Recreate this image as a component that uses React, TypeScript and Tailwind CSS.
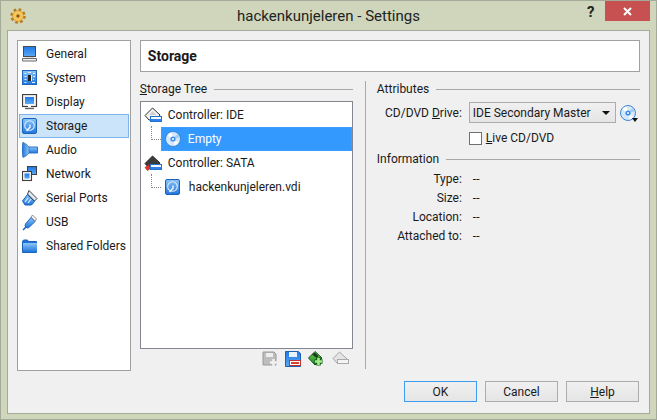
const uiFont = { fontFamily: 'Roboto, "Noto Sans", sans-serif' };

const Gradients = () => (
  <svg width="0" height="0" className="absolute">
    <defs>
      <linearGradient id="blue" x1="0" y1="0" x2="0" y2="1">
        <stop offset="0" stopColor="#8cc6f8" />
        <stop offset="1" stopColor="#1f74dc" />
      </linearGradient>
      <linearGradient id="blueSide" x1="0" y1="0" x2="1" y2="0">
        <stop offset="0" stopColor="#1f6fd4" />
        <stop offset="1" stopColor="#8cc6f8" />
      </linearGradient>
      <linearGradient id="screen" x1="0" y1="0" x2="0" y2="1">
        <stop offset="0" stopColor="#1f78e8" />
        <stop offset="1" stopColor="#5aaaf4" />
      </linearGradient>
      <linearGradient id="green" x1="0" y1="0" x2="0" y2="1">
        <stop offset="0" stopColor="#6fca4a" />
        <stop offset="1" stopColor="#1f8a2c" />
      </linearGradient>
    </defs>
  </svg>
);

const Monitor = () => (
  <svg width="16" height="16" viewBox="0 0 16 16">
    <rect x="1.5" y="0.5" width="12" height="10" fill="url(#screen)" stroke="#4a4a4a" />
    <path d="M3 11h9v2H3z" fill="#ddd" />
    <path d="M0.5 12.5h14v2.5h-14z" fill="#f2f2f2" stroke="#6a6a6a" />
  </svg>
);
const Chip = () => (
  <svg width="16" height="16" viewBox="0 0 16 16">
    <rect x="0.5" y="0.5" width="14" height="14" fill="url(#blue)" stroke="#1f66bf" />
    <path d="M2.5 3h2v1h-2zM2.5 6h2v1h-2zM2.5 9h2v1h-2zM2.5 12h2v1h-2zM11 3h2v1h-2zM11 6h2v1h-2zM11 9h1v1h-1zM10 12h3v1h-3zM6 2h3v1H6z" fill="#dff0ff" />
    <rect x="6" y="5" width="3" height="6" fill="#222" />
    <rect x="9" y="5" width="1" height="6" fill="#eee" />
  </svg>
);
const Display = () => (
  <svg width="16" height="16" viewBox="0 0 16 16">
    <rect x="0.5" y="0.5" width="14" height="12" fill="#f4f4f4" stroke="#3f3f3f" strokeWidth="1.2" />
    <rect x="3" y="3" width="9" height="7" fill="url(#screen)" />
    <path d="M6 11h3v2H6z" fill="#fff" />
    <path d="M3 14.5h9" stroke="#666" strokeWidth="1.4" />
  </svg>
);
const Disk = () => (
  <svg width="16" height="17" viewBox="0 0 16 17">
    <rect x="0.5" y="0.5" width="14" height="15" rx="1.5" fill="url(#blue)" stroke="#1a62ba" />
    <circle cx="7.5" cy="7.5" r="4.8" fill="none" stroke="#d8ecff" strokeWidth="1.1" />
    <circle cx="8" cy="7.5" r="1" fill="#d8ecff" />
    <path d="M8.5 8.5l-4 4.5" stroke="#f2f9ff" strokeWidth="1.5" />
  </svg>
);
const Speaker = () => (
  <svg width="16" height="16" viewBox="0 0 16 16">
    <path d="M6 5h9.5v6H6z" fill="url(#blue)" stroke="#2a74c8" />
    <path d="M1 0.5c3 1 5 3 6 4.5v6c-1 1.5-3 3.5-6 4.5-0.8-2-1-5-1-7.5s0.2-5.5 1-8z" fill="url(#blueSide)" stroke="#1f62b2" strokeWidth="0.6" />
  </svg>
);
const Network = () => (
  <svg width="16" height="16" viewBox="0 0 16 16">
    <rect x="5.5" y="0.5" width="9" height="8" fill="url(#screen)" stroke="#3f3f3f" />
    <rect x="0.5" y="5.5" width="9" height="9" fill="#f4f4f4" stroke="#3f3f3f" strokeWidth="1.1" />
    <rect x="2.5" y="7.5" width="5" height="5" fill="url(#screen)" />
  </svg>
);
const Serial = () => (
  <svg width="16" height="17" viewBox="0 0 16 17">
    <path d="M5.5 4.5l7 7-3 3.5H3L0.5 11z" fill="url(#blue)" stroke="#1a62ba" />
    <path d="M3 12l3-4M6 13l3-4" stroke="#e4f2ff" strokeWidth="1.2" />
    <path d="M7 0.5l8 8-2.5 2.5-7-7z" fill="#dfeaf5" stroke="#2a2a2a" strokeWidth="0.9" />
  </svg>
);
const Usb = () => (
  <svg width="16" height="17" viewBox="0 0 16 17">
    <path d="M9 3.5l4 4-6 6-2 .5-2-2 .5-2z" fill="url(#blue)" stroke="#1f66bf" />
    <path d="M10.5 1l4 4-1.5 2-4-4z" fill="#f4f4f4" stroke="#777" strokeWidth="0.8" />
    <path d="M4 13l-3 3" stroke="#1f66bf" strokeWidth="1.6" />
  </svg>
);
const Folder = () => (
  <svg width="16" height="15" viewBox="0 0 16 15">
    <path d="M0.5 2.5l1-1.5h4l1 1.5h8v11h-14z" fill="#1f6fd4" stroke="#1a62ba" />
    <path d="M1 4h14v9H1z" fill="url(#blue)" />
  </svg>
);
const Cd = () => (
  <svg width="16" height="16" viewBox="0 0 16 16">
    <circle cx="8" cy="8" r="7.5" fill="#d5e9fb" stroke="#3f86d4" />
    <path d="M8 8L2.5 4.5a7 7 0 0 1 4-3z" fill="#fff" />
    <path d="M8 8l5.5 3.5a7 7 0 0 1-4 3z" fill="#f4fbff" />
    <path d="M8 8L14.5 6.5a7 7 0 0 0-2-3.5z" fill="#a5cdf2" />
    <circle cx="8" cy="8" r="2.6" fill="#3f8fe8" />
    <circle cx="8" cy="8" r="1" fill="#fff" />
  </svg>
);
const Controller = ({ sata }: { sata?: boolean }) => (
  <svg width="18" height="17" viewBox="0 0 18 17">
    <path d="M8.5 1L1 8.5 5 13h8l3-5z" fill={sata ? "#3a3a3a" : "#f2f2f2"} stroke="#2c2c2c" />
    {!sata && <path d="M5 8l3.5-4 4 4z" fill="#cfcfcf" />}
    {sata && <path d="M5 9.5l-4 3 2.5 3 3-2z" fill="#e0352a" stroke="#a11f14" strokeWidth="0.6" />}
    <rect x="6.5" y="9.5" width="11" height="5" fill="#f7fbff" stroke="#1f74d0" />
    <rect x="7" y="12" width="10" height="2" fill="#2f80ee" />
  </svg>
);

const navItems = [
  { label: "General", icon: <Monitor /> },
  { label: "System", icon: <Chip /> },
  { label: "Display", icon: <Display /> },
  { label: "Storage", icon: <Disk />, active: true },
  { label: "Audio", icon: <Speaker /> },
  { label: "Network", icon: <Network /> },
  { label: "Serial Ports", icon: <Serial /> },
  { label: "USB", icon: <Usb /> },
  { label: "Shared Folders", icon: <Folder /> },
];

const infoRows = ["Type:", "Size:", "Location:", "Attached to:"];

const GroupTitle = ({ children }: { children: React.ReactNode }) => (
  <div className="flex items-center gap-[7px] h-[16px]">
    <span>{children}</span>
    <div className="flex-1 h-px bg-[#a8a8a8]" />
  </div>
);

const DialogButton = ({ children, focused }: { children: React.ReactNode; focused?: boolean }) => (
  <button
    className={`w-[73px] h-[21px] border bg-gradient-to-b from-[#f0f0f0] to-[#e5e5e5] flex items-center justify-center ${
      focused ? "border-[#3c9cf0]" : "border-[#acacac]"
    }`}
  >
    {children}
  </button>
);

export default function App() {
  return (
    <div
      className="w-[657px] h-[420px] bg-[#cfd6bc] border border-[#a3aa98] flex flex-col text-[12px] text-[#1a1a1a] overflow-hidden"
      style={uiFont}
    >
      <Gradients />
      {/* Title bar */}
      <div className="h-[29px] shrink-0 flex items-center relative">
        <svg className="ml-[9px]" width="16" height="16" viewBox="0 0 16 16">
          <circle cx="8" cy="8" r="6.4" fill="none" stroke="#b87814" strokeWidth="2.6" strokeDasharray="2.6 2.4" />
          <circle cx="8" cy="8" r="5.4" fill="#f7c65a" stroke="#c88a20" strokeWidth="0.6" />
          <circle cx="8" cy="8" r="1.7" fill="#8a5a10" />
        </svg>
        <div className="absolute inset-x-0 top-[4px] text-center text-[15px] leading-[22px] text-[#222]">
          hackenkunjeleren - Settings
        </div>
        <span className="absolute left-[586px] top-[1px] text-[15px] leading-[20px] font-bold text-[#222]">?</span>
        <div className="absolute left-[604px] top-0 w-[45px] h-[20px] bg-[#c75050] flex items-center justify-center">
          <svg width="9" height="9" viewBox="0 0 9 9">
            <path d="M1 1l7 7M8 1l-7 7" stroke="#fff" strokeWidth="2" />
          </svg>
        </div>
      </div>

      {/* Client area */}
      <div className="mx-[6px] h-[384px] bg-[#f0f0f0] border border-[#a3aa98] px-[9px] pt-[9px] flex flex-col">
        <div className="flex gap-[9px] h-[331px]">
          {/* Sidebar */}
          <div className="w-[114px] h-[331px] bg-white border border-[#a0a0a0] p-px">
            {navItems.map((item) => (
              <div
                key={item.label}
                className={`h-[24px] flex items-center whitespace-nowrap ${
                  item.active ? "bg-[#cce4f9] border border-[#7db4ea]" : "border border-transparent"
                }`}
              >
                <div className="w-[26px] pl-[2px] flex justify-start shrink-0">{item.icon}</div>
                <span>{item.label}</span>
              </div>
            ))}
          </div>

          {/* Main column */}
          <div className="w-[501px] flex flex-col">
            <div className="h-[32px] bg-white border border-[#a0a0a0] flex items-center pl-[7px] text-[14px] font-bold">
              Storage
            </div>
            <div className="flex mt-[9px] flex-1">
              {/* Storage tree */}
              <div className="w-[213px] flex flex-col">
                <GroupTitle>
                  <span className="underline">S</span>torage Tree
                </GroupTitle>
                <div className="mt-[4px] h-[248px] bg-white border border-[#828790] relative">
                  <div className="h-[24px] mt-px flex items-center pl-[3px] gap-[6px]">
                    <Controller />
                    <span>Controller: IDE</span>
                  </div>
                  <div className="h-[24px] ml-[20px] bg-[#3399ff] border border-dotted border-[#d9822b] flex items-center pl-[3px] gap-[7px] text-white">
                    <Cd />
                    <span>Empty</span>
                  </div>
                  <div className="h-[24px] flex items-center pl-[3px] gap-[6px]">
                    <Controller sata />
                    <span>Controller: SATA</span>
                  </div>
                  <div className="h-[24px] flex items-center pl-[24px] gap-[8px]">
                    <Disk />
                    <span>hackenkunjeleren.vdi</span>
                  </div>
                  {/* Tree guide lines */}
                  <div className="absolute left-[10px] top-[24px] w-[10px] h-[14px] border-l border-b border-dotted border-[#888]" />
                  <div className="absolute left-[10px] top-[72px] w-[10px] h-[14px] border-l border-b border-dotted border-[#888]" />
                </div>
                <div className="flex justify-end gap-[7px] mt-px pr-[4px] h-[18px] items-center">
                  <svg width="16" height="16" viewBox="0 0 16 16">
                    <path d="M1 1h11l2 2v11H1z" fill="#bdbdbd" stroke="#9a9a9a" />
                    <rect x="4" y="2" width="7" height="4" fill="#eee" />
                    <path d="M8 11.5h7M11.5 8v7" stroke="#f0f0f0" strokeWidth="2.6" />
                  </svg>
                  <svg width="16" height="16" viewBox="0 0 16 16">
                    <path d="M0.5 0.5h13l2 2v13h-15z" fill="url(#screen)" stroke="#1f5fb0" />
                    <rect x="4" y="1" width="8" height="5" fill="#e8f2ff" />
                    <rect x="4.5" y="9.5" width="11" height="5" fill="#fff" stroke="#b33" />
                    <rect x="6" y="11" width="8" height="2" fill="#d9402a" />
                  </svg>
                  <svg width="17" height="16" viewBox="0 0 17 16">
                    <path d="M7 0.5L0.5 7 7 14l7-7z" fill="url(#green)" stroke="#14561c" />
                    <path d="M4 3.5l3-2 3.5 3.5-2 2z" fill="#1c3d1e" />
                    <path d="M10.5 6.5v8M6.5 10.5h8" stroke="#0f5a1c" strokeWidth="4.5" />
                    <path d="M10.5 7v7M7 10.5h7" stroke="#a6ea88" strokeWidth="2.6" />
                  </svg>
                  <svg width="17" height="16" viewBox="0 0 17 16">
                    <path d="M7.5 1L1 7.5 5 12h8l2-4z" fill="#e4e4e4" stroke="#a5a5a5" />
                    <rect x="5.5" y="8.5" width="11" height="4" fill="#f4f4f4" stroke="#aaa" />
                  </svg>
                </div>
              </div>

              {/* Splitter */}
              <div className="w-px bg-[#a8a8a8] ml-[12px] h-[288px]" />

              {/* Attributes */}
              <div className="ml-[11px] w-[263px] flex flex-col">
                <GroupTitle>Attributes</GroupTitle>
                <div className="flex items-center mt-[5px] h-[21px]">
                  <span className="w-[85px] text-right">
                    CD/DVD <span className="underline">D</span>rive:
                  </span>
                  <div className="ml-[7px] w-[147px] h-[21px] border border-[#acacac] bg-gradient-to-b from-[#f0f0f0] to-[#e5e5e5] flex items-center justify-between pl-[3px] pr-[5px]">
                    <span>IDE Secondary Master</span>
                    <svg width="8" height="4" viewBox="0 0 8 4">
                      <path d="M0 0h8L4 4z" fill="#111" />
                    </svg>
                  </div>
                  <div className="ml-[4px] relative">
                    <Cd />
                    <svg className="absolute right-[-2px] bottom-[-1px]" width="6" height="4" viewBox="0 0 6 4">
                      <path d="M0 0h6L3 4z" fill="#111" />
                    </svg>
                  </div>
                </div>
                <label className="flex items-center ml-[92px] mt-[7px] h-[16px] gap-[4px]">
                  <span className="w-[13px] h-[13px] border border-[#707070] bg-white" />
                  <span>
                    <span className="underline">L</span>ive CD/DVD
                  </span>
                </label>
                <div className="mt-[5px]">
                  <GroupTitle>Information</GroupTitle>
                </div>
                <div className="mt-[2px] flex flex-col">
                  {infoRows.map((label) => (
                    <div key={label} className="h-[19px] flex items-center">
                      <span className="w-[85px] text-right">{label}</span>
                      <span className="ml-[11px]">--</span>
                    </div>
                  ))}
                </div>
              </div>
            </div>
          </div>
        </div>

        {/* Dialog buttons */}
        <div className="flex justify-end gap-[8px] mt-[10px] pr-[1px]">
          <DialogButton focused>OK</DialogButton>
          <DialogButton>Cancel</DialogButton>
          <DialogButton>
            <span>
              <span className="underline">H</span>elp
            </span>
          </DialogButton>
        </div>
      </div>
    </div>
  );
}
